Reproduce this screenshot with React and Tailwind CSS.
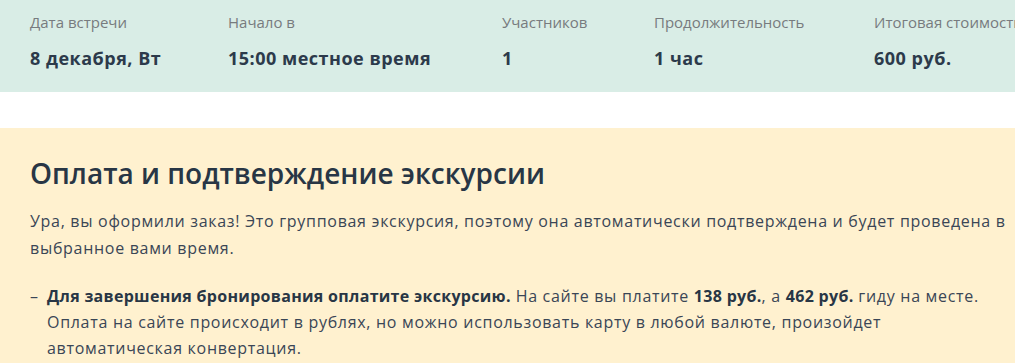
export default function App() {
  const stats = [
    { label: 'Дата встречи', value: '8 декабря, Вт', w: 'w-[198px]' },
    { label: 'Начало в', value: '15:00 местное время', w: 'w-[274px]' },
    { label: 'Участников', value: '1', w: 'w-[152px]' },
    { label: 'Продолжительность', value: '1 час', w: 'w-[220px]' },
    { label: 'Итоговая стоимость', value: '600 руб.', w: 'w-[200px]' },
  ];

  const strong = 'font-bold text-[#283645] tracking-[0.3px]';

  return (
    <div className="w-[1015px] h-[363px] overflow-hidden bg-white font-['Open_Sans',sans-serif] text-[#2c3a4b]">
      <div className="w-[1100px]">
        <div className="bg-[#d9ede6] h-[92px] px-[30px] pt-[11px] flex">
          {stats.map((s) => (
            <div key={s.label} className={`${s.w} shrink-0`}>
              <div className="text-[15px] leading-[22px] text-[#777b7e] whitespace-nowrap">{s.label}</div>
              <div className="mt-[14px] text-[18px] leading-[22px] font-bold tracking-[0.5px] whitespace-nowrap">{s.value}</div>
            </div>
          ))}
        </div>
        <div className="h-[36px] bg-white" />
        <div className="bg-[#fff1cf] px-[30px] pt-[25px] pb-[40px]">
          <h2 className="text-[28px] leading-[40px] font-semibold text-[#283645]">Оплата и подтверждение экскурсии</h2>
          <p className="mt-[15px] w-[1000px] text-[16px] leading-[27px] tracking-[0.7px] text-[#3a4656]">
            Ура, вы оформили заказ! Это групповая экскурсия, поэтому она автоматически подтверждена и будет проведена в выбранное вами время.
          </p>
          <ul className="mt-[21px] w-[1000px] text-[16px] leading-[26px] tracking-[0.7px] text-[#3a4656]">
            <li className="flex">
              <span className="w-[17px] shrink-0 tracking-normal">–</span>
              <span>
                <b className={strong}>Для завершения бронирования оплатите экскурсию.</b> На сайте вы платите{' '}
                <b className={strong}>138 руб.</b>, а <b className={strong}>462 руб.</b> гиду на месте.
                <br />
                Оплата на сайте происходит в рублях, но можно использовать карту в любой валюте, произойдет
                <br />
                автоматическая конвертация.
              </span>
            </li>
          </ul>
        </div>
      </div>
    </div>
  );
}
